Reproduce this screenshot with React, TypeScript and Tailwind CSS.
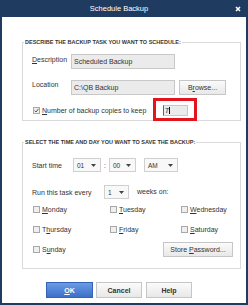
import React from "react";

const U = ({ children }: { children: React.ReactNode }) => (
  <span className="underline underline-offset-[1px]">{children}</span>
);

function Check({ checked = false }: { checked?: boolean }) {
  return (
    <span className="w-[7px] h-[7px] border border-[#a8a8a8] bg-[#efefef] flex items-center justify-center shrink-0">
      {checked && (
        <svg width="5" height="5" viewBox="0 0 5 5">
          <path d="M0.6 2.6 L2 4 L4.5 0.8" stroke="#555" strokeWidth="1" fill="none" />
        </svg>
      )}
    </span>
  );
}

function Select({ value, w }: { value: string; w: string }) {
  return (
    <div
      className={`${w} h-[14px] bg-[#f8f8f8] border border-[#d0d0d0] flex items-center justify-between pl-[3px] pr-[4px] text-[6.5px] text-[#333] shrink-0`}
    >
      <span>{value}</span>
      <svg width="5" height="3" viewBox="0 0 5 3">
        <polygon points="0,0 5,0 2.5,3" fill="#444" />
      </svg>
    </div>
  );
}

function Day({ label, w }: { label: React.ReactNode; w?: string }) {
  return (
    <div className={`${w ?? ""} flex items-center pl-[1px]`}>
      <Check />
      <span className="ml-[2px]">{label}</span>
    </div>
  );
}

export default function App() {
  return (
    <div className="w-[248px] h-[305px] bg-[#1f3b60] flex flex-col font-['Liberation_Sans',Arial,sans-serif] text-[#333] text-[7px] leading-[9px]">
      {/* title bar */}
      <div className="h-[17px] flex items-center shrink-0">
        <span className="flex-1 text-center pl-[7px] text-white text-[7.5px]">Schedule Backup</span>
        <span className="w-[14px] mr-[3px] flex justify-center">
          <svg width="6" height="6" viewBox="0 0 6 6">
            <path d="M1 1 L5 5 M5 1 L1 5" stroke="#fff" strokeWidth="1.6" />
          </svg>
        </span>
      </div>

      {/* body */}
      <div className="flex-1 bg-white mx-[2px] mb-[2px] pt-[21px] pl-[20px] pr-[5px] flex flex-col">
        {/* group 1 */}
        <fieldset className="border border-[#dadada] px-0">
          <legend className="ml-[1px] px-[1px] text-[5.5px] leading-[8px] font-bold text-[#333]">
            DESCRIBE THE BACKUP TASK YOU WANT TO SCHEDULE:
          </legend>
          <div className="pl-[9px] pt-[8px] pb-[4px] flex flex-col">
            <div className="flex items-start">
              <span className="w-[39px] mt-[1px]">
                <U>D</U>escription
              </span>
              <div className="w-[104px] h-[15px] bg-[#ebebeb] border border-[#c8c8c8] flex items-center pl-[2px]">
                Scheduled Backup
              </div>
            </div>
            <div className="flex items-start mt-[11px]">
              <span className="w-[39px] mt-[0px]">Location</span>
              <div className="w-[104px] h-[15px] bg-[#ebebeb] border border-[#c8c8c8] flex items-center pl-[2px]">
                C:\QB Backup
              </div>
              <div className="ml-[4px] w-[47px] h-[15px] bg-gradient-to-b from-[#fbfbfb] to-[#e8e8e8] border border-[#c6c6c6] flex items-center justify-center">
                <span>
                  B<U>r</U>owse...
                </span>
              </div>
            </div>
            <div className="flex items-center mt-[10px] h-[11px]">
              <span className="ml-[1px]">
                <Check checked />
              </span>
              <span className="ml-[2px] w-[121px]">
                <U>N</U>umber of backup copies to keep
              </span>
              <div className="relative">
                <div className="w-[25px] h-[11px] bg-[#ebebeb] border border-[#c8c8c8] border-l-[#3a68b0] flex items-center pl-[1px] text-[#111]">
                  <span>7</span>
                  <span className="w-px h-[7px] bg-[#111] ml-[0.5px]" />
                </div>
                <div className="absolute -left-[10px] -top-[7px] w-[44px] h-[23px] border-[3px] border-[#e3141d]" />
              </div>
            </div>
          </div>
        </fieldset>

        {/* group 2 */}
        <fieldset className="border border-[#dadada] px-0 mt-[17px]">
          <legend className="ml-[1px] px-[1px] text-[5.5px] leading-[8px] font-bold text-[#333]">
            SELECT THE TIME AND DAY YOU WANT TO SAVE THE BACKUP:
          </legend>
          <div className="pl-[9px] pr-[7px] pt-[12px] pb-[11px] flex flex-col">
            <div className="flex items-center">
              <span className="w-[41px]">Start time</span>
              <Select value="01" w="w-[28px]" />
              <span className="w-[8px] text-center">:</span>
              <Select value="00" w="w-[27px]" />
              <span className="ml-[8px]">
                <Select value="AM" w="w-[34px]" />
              </span>
            </div>
            <div className="flex items-center mt-[13px]">
              <span className="w-[72px]">Run this task every</span>
              <Select value="1" w="w-[25px]" />
              <span className="ml-[8px] -mt-[2px]">weeks on:</span>
            </div>
            <div className="flex items-center mt-[5px] h-[10px]">
              <Day w="w-[77px]" label={<><U>M</U>onday</>} />
              <Day w="w-[71px]" label={<><U>T</U>uesday</>} />
              <Day label={<><U>W</U>ednesday</>} />
            </div>
            <div className="flex items-center mt-[10px] h-[10px]">
              <Day w="w-[77px]" label={<>T<U>h</U>ursday</>} />
              <Day w="w-[71px]" label={<><U>F</U>riday</>} />
              <Day label={<><U>S</U>aturday</>} />
            </div>
            <div className="flex items-center mt-[8px] h-[15px]">
              <Day label={<>S<U>u</U>nday</>} />
              <div className="ml-auto w-[70px] h-[15px] bg-gradient-to-b from-[#fbfbfb] to-[#e8e8e8] border border-[#c6c6c6] flex items-center justify-center">
                <span>
                  Store <U>P</U>assword...
                </span>
              </div>
            </div>
          </div>
        </fieldset>

        {/* buttons */}
        <div className="flex mt-[13px] ml-[24px] font-bold">
          <div className="w-[47px] h-[16px] bg-gradient-to-b from-[#6a9be6] to-[#3d6fc8] border border-[#3462b6] text-white flex items-center justify-center">
            <span>
              <U>O</U>K
            </span>
          </div>
          <div className="ml-[3px] w-[46px] h-[16px] bg-gradient-to-b from-[#fbfbfb] to-[#e8e8e8] border border-[#c6c6c6] flex items-center justify-center">
            Cancel
          </div>
          <div className="ml-[4px] w-[46px] h-[16px] bg-gradient-to-b from-[#fbfbfb] to-[#e8e8e8] border border-[#c6c6c6] flex items-center justify-center">
            Help
          </div>
        </div>
      </div>
    </div>
  );
}
